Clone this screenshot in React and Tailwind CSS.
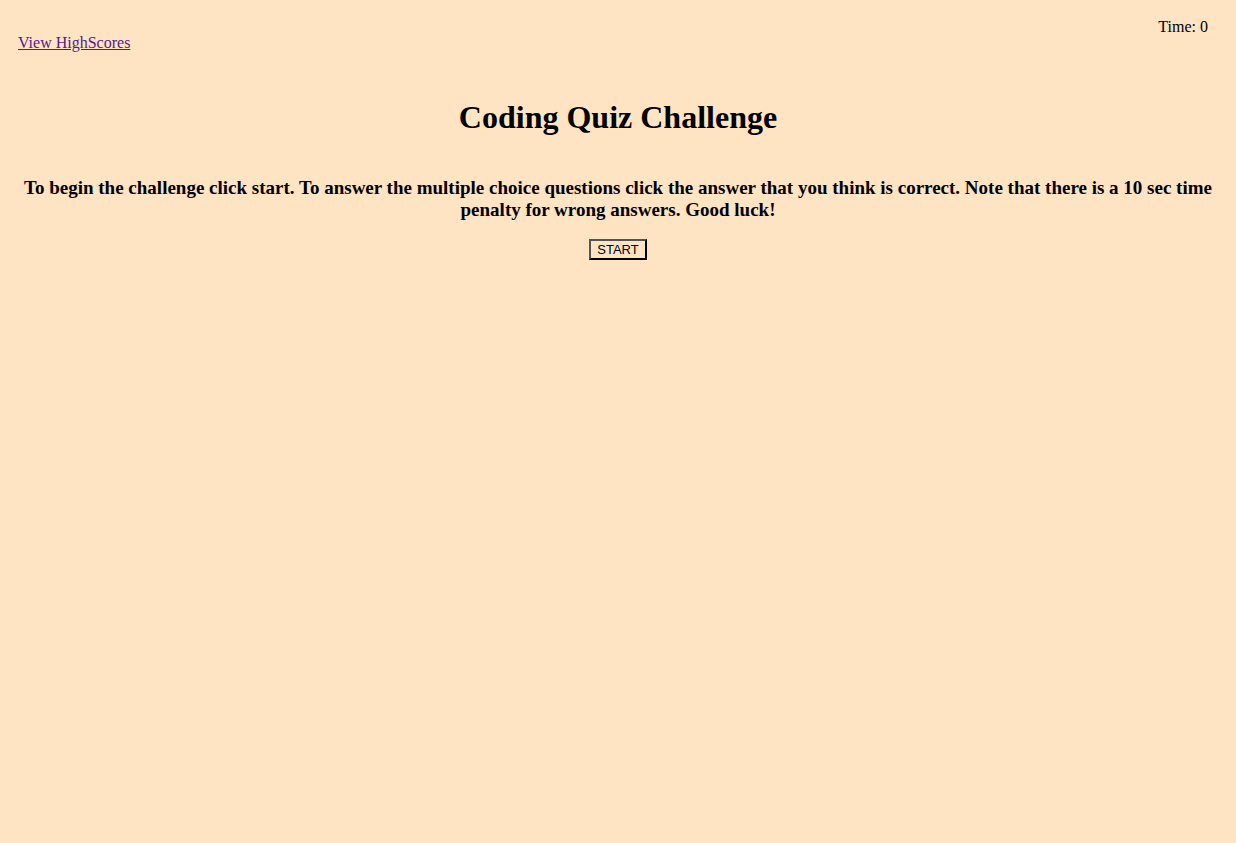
import React from "react";

export default function App() {
  return (
    <div className="min-h-screen bg-[#ffe4c4] px-[18px] pt-[18px] font-['Liberation_Serif','Times_New_Roman',serif] text-base leading-[18px] text-black">
      <header className="flex items-start justify-between">
        <a href="#highscores" className="mt-4 text-[#551a8b] underline">
          View HighScores
        </a>
        <div className="pr-[10px]">Time: 0</div>
      </header>
      <main className="flex flex-col items-center text-center">
        <h1 className="mt-[47px] text-[32px] leading-[37px] font-bold">Coding Quiz Challenge</h1>
        <h3 className="mt-[41px] text-[19px] leading-[22px] font-bold">
          To begin the challenge click start. To answer the multiple choice questions click the
          answer that you think is correct. Note that there is a 10 sec time penalty for wrong
          answers. Good luck!
        </h3>
        <button
          type="button"
          className="mt-[18px] border-2 border-black px-[6px] py-px font-['Liberation_Sans',Arial,sans-serif] text-[13px] leading-[15px] [border-style:outset]"
        >
          START
        </button>
      </main>
    </div>
  );
}
